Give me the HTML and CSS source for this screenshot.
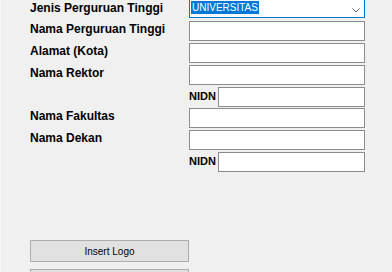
FILE: index.html
```html
<!DOCTYPE html>
<html lang="id">
<head>
    <meta charset="UTF-8">
    <meta name="viewport" content="width=device-width, initial-scale=1.0">
    <title>Data Perguruan Tinggi</title>
    <link rel="stylesheet" href="styles.css">
</head>
<body>
    <div class="form">
        <div class="row row-combo">
            <label class="label">Jenis Perguruan Tinggi</label>
            <div class="combo">
                <span class="combo-value">UNIVERSITAS</span>
                <svg class="combo-arrow" width="8" height="5" viewBox="0 0 8 5">
                    <polyline points="0.5,0.5 4,4 7.5,0.5" fill="none" stroke="#606060" stroke-width="1"/>
                </svg>
            </div>
        </div>
        <div class="row">
            <label class="label">Nama Perguruan Tinggi</label>
            <input class="field" type="text">
        </div>
        <div class="row">
            <label class="label">Alamat (Kota)</label>
            <input class="field" type="text">
        </div>
        <div class="row">
            <label class="label">Nama Rektor</label>
            <input class="field" type="text">
        </div>
        <div class="row row-nidn">
            <label class="label label-nidn">NIDN</label>
            <input class="field field-nidn" type="text">
        </div>
        <div class="row row-tight">
            <label class="label">Nama Fakultas</label>
            <input class="field" type="text">
        </div>
        <div class="row">
            <label class="label">Nama Dekan</label>
            <input class="field" type="text">
        </div>
        <div class="row row-nidn">
            <label class="label label-nidn">NIDN</label>
            <input class="field field-nidn" type="text">
        </div>
    </div>

    <div class="actions">
        <button class="btn">Insert Logo</button>
        <button class="btn"></button>
    </div>
</body>
</html>
```

FILE: styles.css
```css
:root {
    --window-color: #f0f0f0;
    --field-border: #8c8c8c;
    --focus-color: #0078d7;
    --button-color: #e1e1e1;
    --button-border: #adadad;
}

* {
    box-sizing: border-box;
    margin: 0;
    padding: 0;
}

body {
    background-color: var(--window-color);
    border-left: 1px solid #f7f7f7;
    font-family: 'Liberation Sans', Arial, sans-serif;
    color: #000;
    height: 272px;
    overflow: hidden;
}

/* Form rows */
.form {
    display: flex;
    flex-direction: column;
    gap: 2px;
    margin-top: -3px;
    padding-left: 29px;
}

.row {
    display: flex;
    align-items: flex-start;
    height: 20px;
}

.row-combo {
    height: 21px;
    margin-bottom: 1px;
}

.row-tight {
    margin-top: -1px;
}

.row-nidn {
    padding-left: 159px;
}

.label {
    width: 159px;
    font-size: 12px;
    font-weight: bold;
    line-height: 14px;
    padding-top: 1px;
    color: #000;
}

.row-combo .label {
    padding-top: 4px;
}

.label-nidn {
    width: 29px;
    font-size: 11px;
    padding-top: 2px;
}

.field {
    width: 176px;
    height: 20px;
    border: 1px solid var(--field-border);
    background-color: #fff;
    font-family: inherit;
    font-size: 10px;
    outline: none;
}

.field-nidn {
    width: 147px;
}

/* Combobox */
.combo {
    width: 176px;
    height: 21px;
    border: 1px solid var(--focus-color);
    background-color: #fff;
    display: flex;
    align-items: flex-start;
    justify-content: space-between;
    padding: 3px 4px 0 1px;
}

.combo-value {
    background-color: var(--focus-color);
    color: #fff;
    font-size: 10px;
    line-height: 13px;
    padding: 0 1px;
}

.combo-arrow {
    margin-top: 7px;
}

/* Buttons */
.actions {
    display: flex;
    flex-direction: column;
    gap: 7px;
    margin-top: 68px;
    padding-left: 29px;
}

.btn {
    width: 159px;
    height: 22px;
    background-color: var(--button-color);
    border: 1px solid var(--button-border);
    font-family: inherit;
    font-size: 10px;
    color: #000;
    cursor: pointer;
}
```
